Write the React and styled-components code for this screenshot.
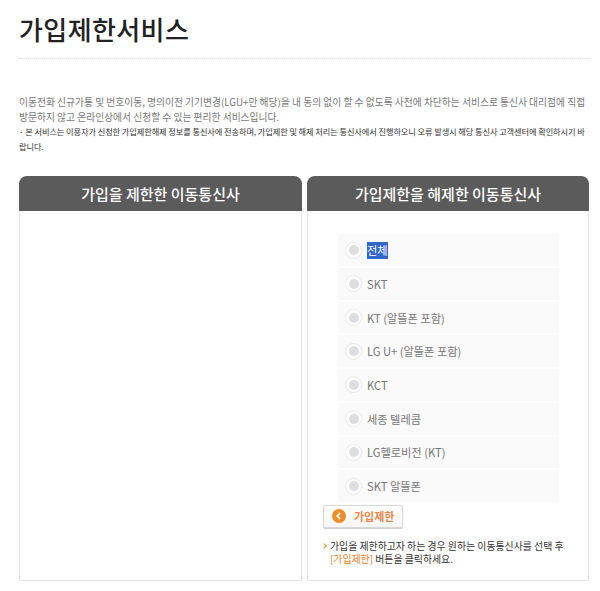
import React from "react";
import styled, { createGlobalStyle } from "styled-components";

const GlobalStyle = createGlobalStyle`
  html, body {
    margin: 0;
    padding: 0;
    background: #fff;
  }
  body {
    font-family: "Noto Sans CJK KR", "Noto Sans", sans-serif;
  }
`;

const Page = styled.div`
  width: 600px;
  height: 591px;
  box-sizing: border-box;
  padding: 11px 11px 0 19px;
  overflow: hidden;
`;

const Title = styled.h1`
  margin: 0;
  height: 47px;
  line-height: 35px;
  font-size: 26px;
  font-weight: 500;
  letter-spacing: 0.4px;
  color: #222;
  border-bottom: 1px dotted #ddd;
`;

const Intro = styled.div`
  margin-top: 36px;
  font-size: 9.75px;
  line-height: 14.6px;
  color: #777;
  word-break: keep-all;
`;

const Notice = styled.div`
  color: #333;
  font-size: 8.2px;
  letter-spacing: -0.075px;
  word-break: normal;
`;

const Columns = styled.div`
  display: grid;
  grid-template-columns: 283px 282px;
  gap: 5px;
  margin-top: 23px;
`;

const Panel = styled.section`
  height: 405px;
  display: flex;
  flex-direction: column;
  box-sizing: border-box;
  border: 1px solid #e6e6e6;
  border-top: 0;
  border-radius: 8px 8px 0 0;
`;

const PanelHead = styled.h2`
  margin: 0 -1px;
  height: 35px;
  line-height: 35px;
  background: #5b5b5b;
  border-radius: 8px 8px 0 0;
  text-align: center;
  color: #fff;
  font-size: 15px;
  font-weight: 500;
`;

const PanelBody = styled.div`
  display: flex;
  flex-direction: column;
  padding: 23px 0 0 15px;
`;

const Options = styled.ul`
  list-style: none;
  margin: 0 0 0 15px;
  padding: 0;
  width: 221px;
  display: flex;
  flex-direction: column;
  gap: 2px;
`;

const Option = styled.li`
  height: 31.7px;
  display: flex;
  align-items: center;
  gap: 5px;
  padding-left: 7px;
  background: #fafafa;
  font-size: 11.2px;
  color: #777;
`;

const Radio = styled.span`
  width: 17px;
  height: 17px;
  box-sizing: border-box;
  border: 1px solid #e8e8e8;
  border-radius: 50%;
  background: #fff;
  display: flex;
  align-items: center;
  justify-content: center;
  &::after {
    content: "";
    width: 10px;
    height: 10px;
    border-radius: 50%;
    background: #dedede;
  }
`;

const Selected = styled.span`
  background: #3366cc;
  color: #fff;
  line-height: 17px;
`;

const LimitButton = styled.button`
  margin-top: 3px;
  width: 80px;
  height: 23px;
  box-sizing: border-box;
  padding: 0 0 0 8px;
  display: flex;
  align-items: center;
  gap: 8px;
  border: 1px solid #d8d8d8;
  border-radius: 2px;
  box-shadow: 0 1px 1px #ccc;
  background: linear-gradient(#fff, #f6f6f6);
  color: #e88a4a;
  font-family: inherit;
  font-size: 11px;
  font-weight: 700;
`;

const Help = styled.p`
  position: relative;
  margin: 12px 0 0;
  padding-left: 7px;
  width: 245px;
  font-size: 9.9px;
  line-height: 13.5px;
  color: #333;
  &::before {
    content: "";
    position: absolute;
    left: -1px;
    top: 4px;
    width: 3px;
    height: 3px;
    border-top: 1.5px solid #e8942c;
    border-right: 1.5px solid #e8942c;
    transform: rotate(45deg);
  }
`;

const Accent = styled.span`
  color: #e8842c;
`;

const carriers = [
  "SKT",
  "KT (알뜰폰 포함)",
  "LG U+ (알뜰폰 포함)",
  "KCT",
  "세종 텔레콤",
  "LG헬로비전 (KT)",
  "SKT 알뜰폰",
];

function ArrowIcon() {
  return (
    <svg width="14" height="14" viewBox="0 0 14 14">
      <circle cx="7" cy="7" r="7" fill="#ee8d2c" />
      <path d="M8.2 4 5.2 7l3 3" fill="none" stroke="#fff" strokeWidth="1.6" />
    </svg>
  );
}

export default function App() {
  return (
    <Page>
      <GlobalStyle />
      <Title>가입제한서비스</Title>
      <Intro>
        이동전화 신규가통 및 번호이동, 명의이전 기기변경(LGU+만 해당)을 내 동의 없이 할 수 없도록 사전에 차단하는 서비스로 통신사 대리점에 직접 방문하지 않고 온라인상에서 신청할 수 있는 편리한 서비스입니다.
        <Notice>
          · 본 서비스는 이용자가 신청한 가입제한해제 정보를 통신사에 전송하며, 가입제한 및 해제 처리는 통신사에서 진행하오니 오류 발생시 해당 통신사 고객센터에 확인하시기 바랍니다.
        </Notice>
      </Intro>
      <Columns>
        <Panel>
          <PanelHead>가입을 제한한 이동통신사</PanelHead>
        </Panel>
        <Panel>
          <PanelHead>가입제한을 해제한 이동통신사</PanelHead>
          <PanelBody>
            <Options>
              <Option>
                <Radio />
                <Selected>전체</Selected>
              </Option>
              {carriers.map((name) => (
                <Option key={name}>
                  <Radio />
                  {name}
                </Option>
              ))}
            </Options>
            <LimitButton>
              <ArrowIcon />
              가입제한
            </LimitButton>
            <Help>
              가입을 제한하고자 하는 경우 원하는 이동통신사를 선택 후 <Accent>[가입제한]</Accent> 버튼을 클릭하세요.
            </Help>
          </PanelBody>
        </Panel>
      </Columns>
    </Page>
  );
}
